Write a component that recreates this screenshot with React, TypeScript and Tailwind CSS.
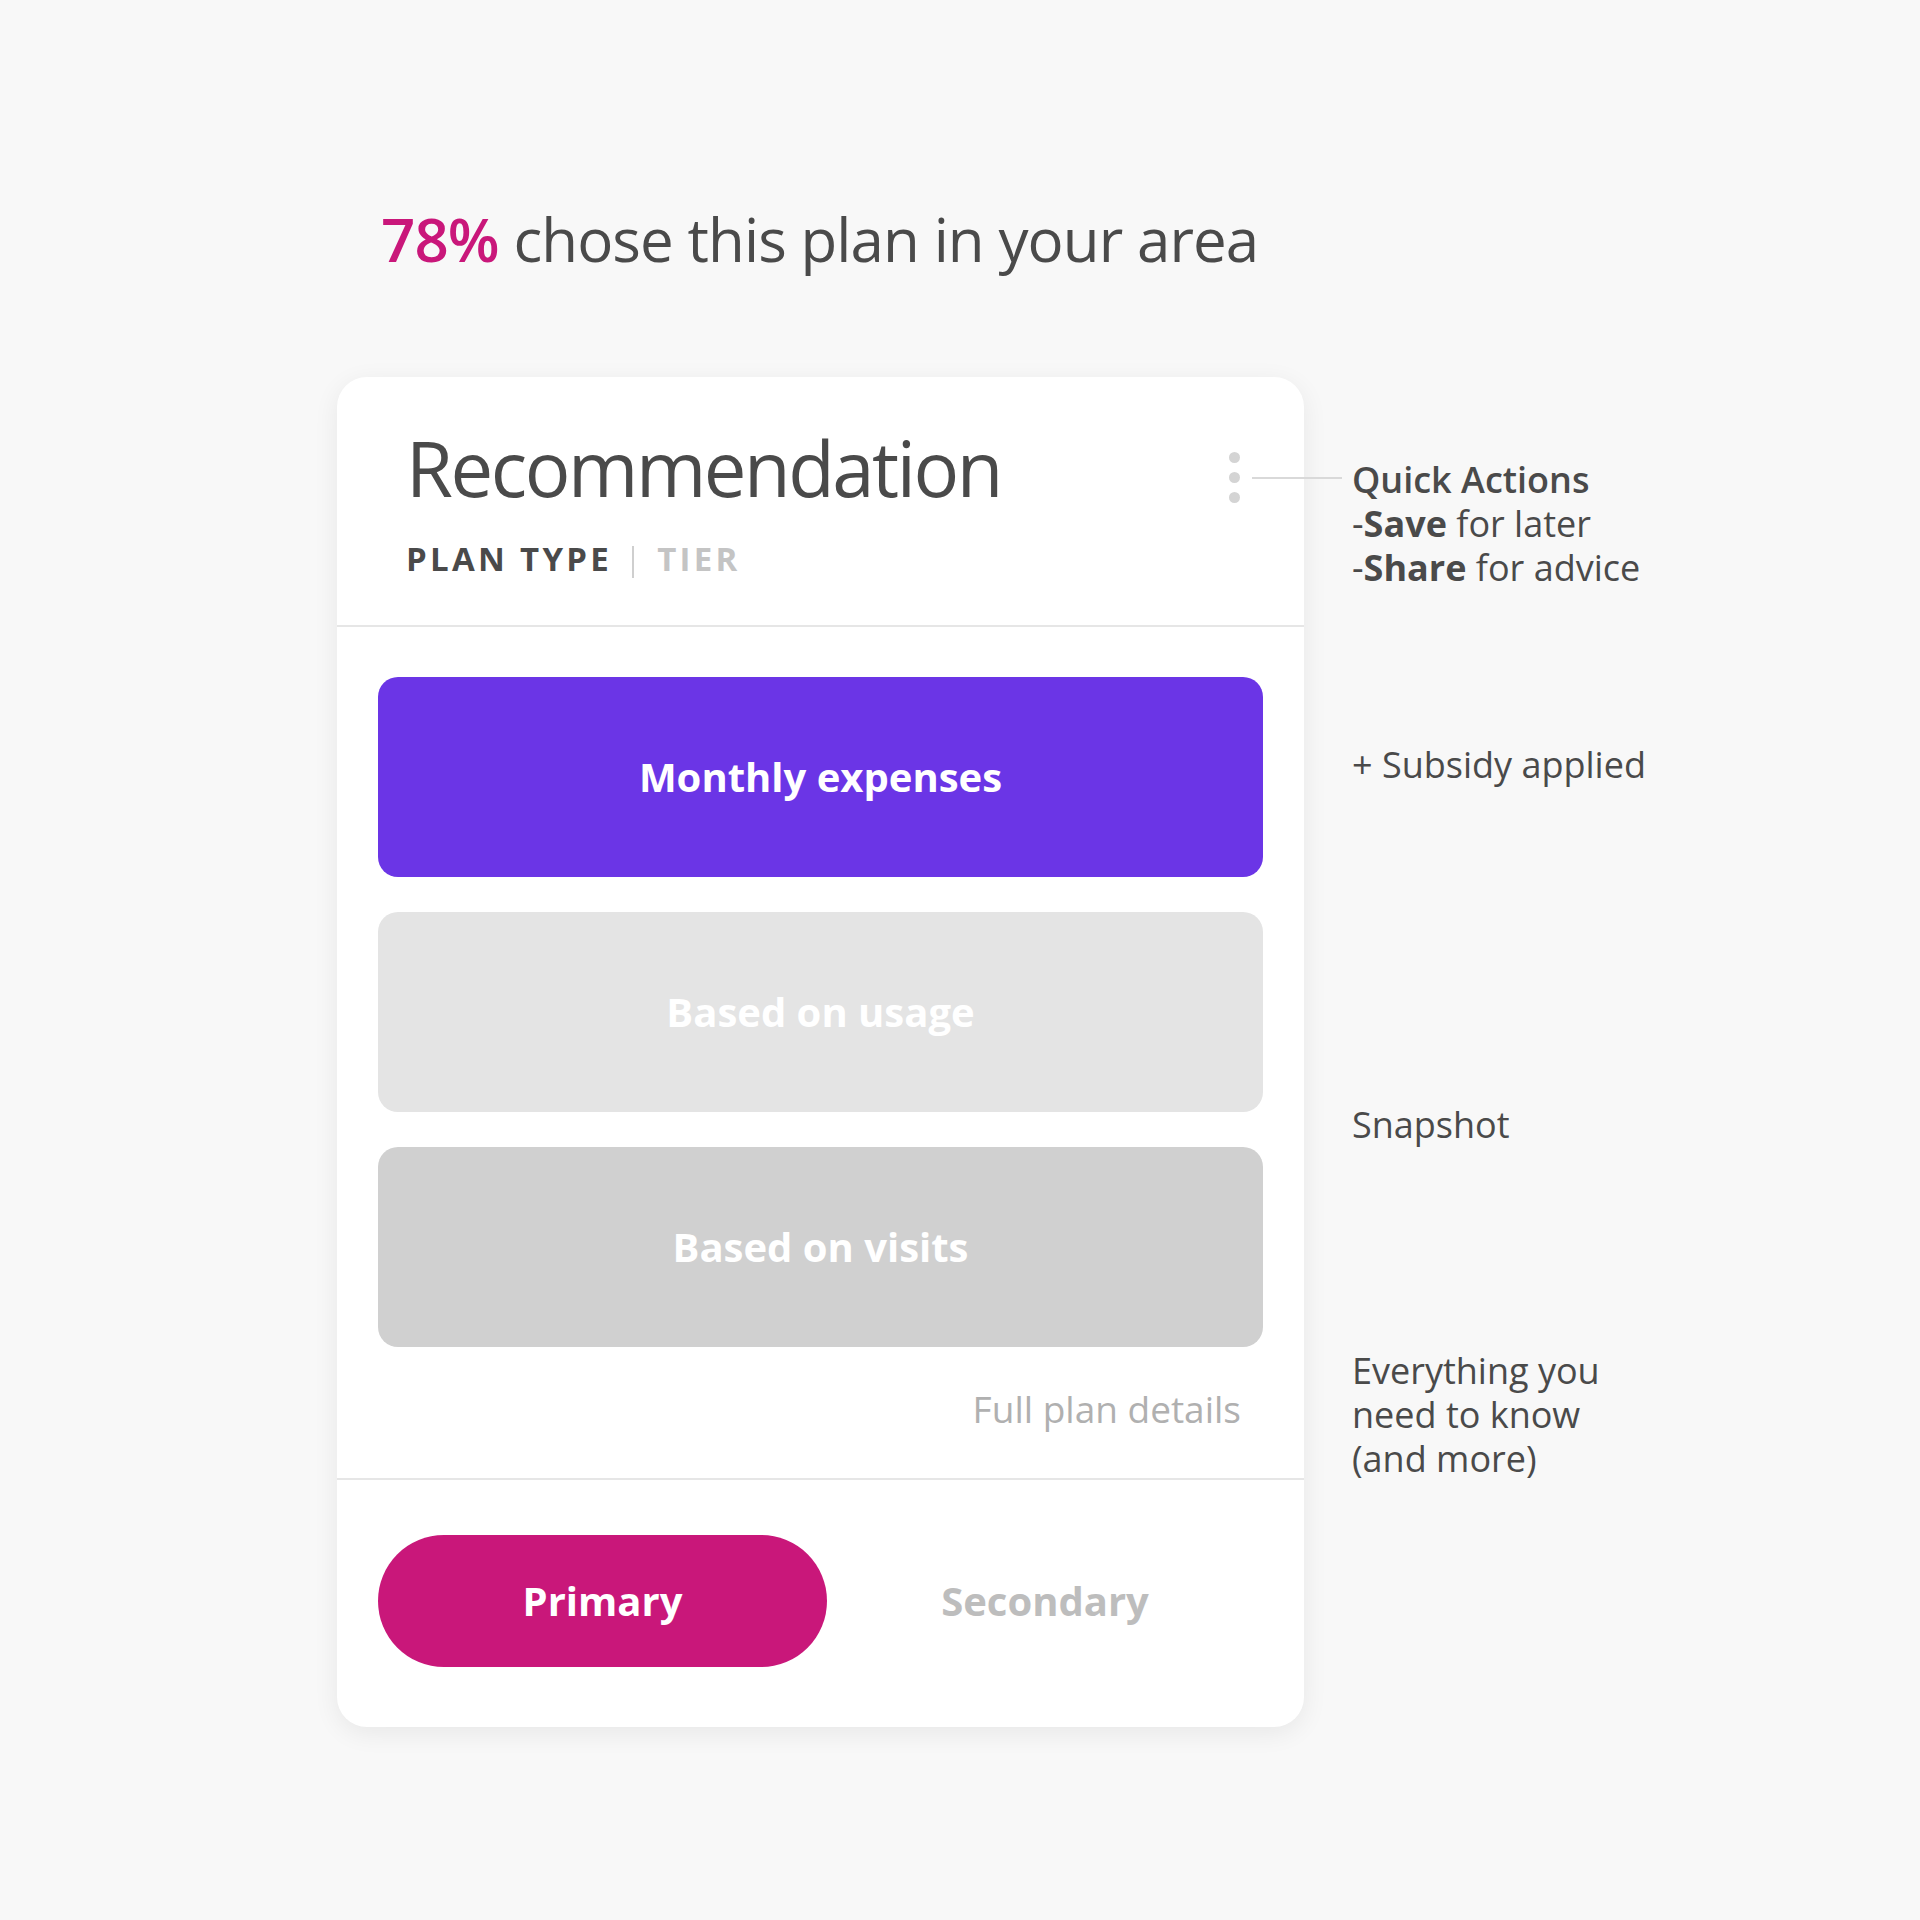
import React from "react";

export default function App() {
  return (
    <div
      className="w-[1920px] min-h-[1920px] bg-[#f8f8f8] pl-[337px] pt-[209px] text-[#4a4a4a]"
      style={{ fontFamily: '"Open Sans", "Noto Sans", sans-serif' }}
    >
      <h1 className="ml-[44px] text-[60px] leading-[60px] tracking-[-0.015em]">
        <span className="font-semibold text-[#c9177a]">78%</span> chose this plan in your area
      </h1>

      <div className="mt-[108px] flex items-start">
        {/* Card */}
        <div className="w-[967px] shrink-0 rounded-[30px] bg-white shadow-[0_6px_26px_rgba(0,0,0,0.07)]">
          {/* Header */}
          <div className="relative flex justify-between border-b-2 border-[#e6e6e6] pb-[50px] pl-[69px] pr-[64px] pt-[53px]">
            <div>
              <h2 className="text-[76px] leading-[76px] tracking-[-0.032em] text-[#4a4a4a]">Recommendation</h2>
              <div className="mt-[37px] flex h-[32px] items-center text-[33px] font-bold leading-[32px] tracking-[0.1em]">
                <span className="text-[#4a4a4a]">PLAN TYPE</span>
                <span className="ml-[20px] mr-[23px] inline-block h-[32px] w-[2px] translate-y-[3px] bg-[#cfcfcf]" />
                <span className="text-[#c4c4c4]">TIER</span>
              </div>
            </div>
            <div className="mt-[22px] flex flex-col gap-[9px]">
              <span className="block h-[11px] w-[11px] rounded-full bg-[#d4d4d4]" />
              <span className="block h-[11px] w-[11px] rounded-full bg-[#d4d4d4]" />
              <span className="block h-[11px] w-[11px] rounded-full bg-[#d4d4d4]" />
            </div>
            {/* connector to annotation */}
            <div className="absolute left-[915px] top-[100px] h-[2px] w-[90px] bg-[#d9d9d9]" />
          </div>

          {/* Body */}
          <div className="border-b-2 border-[#e6e6e6] px-[41px] pb-[51px] pt-[50px]">
            <div className="flex flex-col gap-[35px]">
              <div className="flex h-[200px] items-center justify-center rounded-[20px] bg-[#6b35e6] text-[40px] font-bold text-white">
                Monthly expenses
              </div>
              <div className="flex h-[200px] items-center justify-center rounded-[20px] bg-[#e4e4e4] text-[40px] font-bold text-white">
                Based on usage
              </div>
              <div className="flex h-[200px] items-center justify-center rounded-[20px] bg-[#d0d0d0] text-[40px] font-bold text-white">
                Based on visits
              </div>
            </div>
            <div className="mt-[43px] pr-[22px] text-right text-[37px] leading-[37px] text-[#b0b0b0]">
              Full plan details
            </div>
          </div>

          {/* Footer */}
          <div className="flex items-center px-[41px] pb-[60px] pt-[55px]">
            <button className="flex h-[132px] w-[449px] items-center justify-center rounded-full bg-[#c9177a] text-[40px] font-bold text-white">
              Primary
            </button>
            <button className="flex h-[132px] flex-1 items-center justify-center text-[40px] font-bold text-[#bdbdbd]">
              Secondary
            </button>
          </div>
        </div>

        {/* Annotations */}
        <div className="ml-[48px] flex flex-col text-[36px] leading-[44px] text-[#4a4a4a]">
          <div className="mt-[81px]">
            <div className="font-semibold">Quick Actions</div>
            <div>
              -<span className="font-bold">Save</span> for later
            </div>
            <div>
              -<span className="font-bold">Share</span> for advice
            </div>
          </div>
          <div className="mt-[153px]">+ Subsidy applied</div>
          <div className="mt-[316px]">Snapshot</div>
          <div className="mt-[202px]">
            <div>Everything you</div>
            <div>need to know</div>
            <div>(and more)</div>
          </div>
        </div>
      </div>
    </div>
  );
}
